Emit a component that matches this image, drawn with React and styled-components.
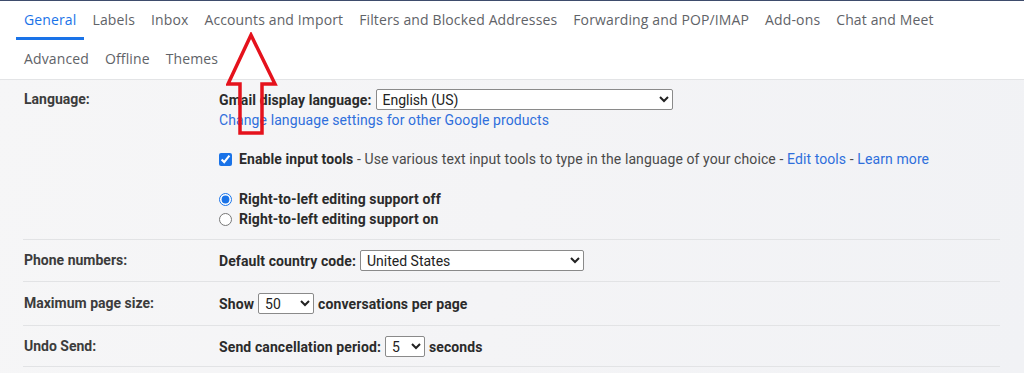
import React from "react";
import styled, { createGlobalStyle } from "styled-components";

const GlobalStyle = createGlobalStyle`
  html, body {
    margin: 0;
    padding: 0;
    background: #fff;
  }
  body {
    font-family: Roboto, "Liberation Sans", Arial, sans-serif;
  }
`;

const tabsTop = ["General", "Labels", "Inbox", "Accounts and Import", "Filters and Blocked Addresses", "Forwarding and POP/IMAP", "Add-ons", "Chat and Meet"];
const tabsBottom = ["Advanced", "Offline", "Themes"];

const App = () => {
  return (
    <Page>
      <GlobalStyle />
      <TabBar>
        <TabRow>
          {tabsTop.map((t) => (
            <Tab key={t} $active={t === "General"}>
              {t}
            </Tab>
          ))}
        </TabRow>
        <TabRow>
          {tabsBottom.map((t) => (
            <Tab key={t}>{t}</Tab>
          ))}
        </TabRow>
      </TabBar>

      <Settings>
        <SettingRow $pad="9px 0 10px">
          <Label>Language:</Label>
          <Content>
            <Line>
              <b>Gmail display language:</b>
              <Select $width={297}>
                <option>English (US)</option>
              </Select>
            </Line>
            <Line>
              <Link>Change language settings for other Google products</Link>
            </Line>
            <Line $top={19}>
              <Check type="checkbox" defaultChecked />
              <b>Enable input tools</b>
              <Muted>
                &nbsp;- Use various text input tools to type in the language of your choice -&nbsp;
              </Muted>
              <Link>Edit tools</Link>
              <Muted>&nbsp;-&nbsp;</Muted>
              <Link>Learn more</Link>
            </Line>
            <Line $top={20}>
              <Check type="radio" name="rtl" defaultChecked />
              <b>Right-to-left editing support off</b>
            </Line>
            <Line>
              <Check type="radio" name="rtl" />
              <b>Right-to-left editing support on</b>
            </Line>
          </Content>
        </SettingRow>

        <SettingRow $pad="10px 0">
          <Label>Phone numbers:</Label>
          <Content>
            <Line>
              <b>Default country code:</b>
              <Select $width={224}>
                <option>United States</option>
              </Select>
            </Line>
          </Content>
        </SettingRow>

        <SettingRow $pad="11px 0">
          <Label>Maximum page size:</Label>
          <Content>
            <Line>
              <b>Show</b>
              <Select $width={56}>
                <option>50</option>
              </Select>
              <b>conversations per page</b>
            </Line>
          </Content>
        </SettingRow>

        <SettingRow $pad="10px 0 9px">
          <Label>Undo Send:</Label>
          <Content>
            <Line>
              <b>Send cancellation period:</b>
              <Select $width={40}>
                <option>5</option>
              </Select>
              <b>seconds</b>
            </Line>
          </Content>
        </SettingRow>
      </Settings>

      <Arrow width="60" height="110" viewBox="0 0 60 110">
        <path d="M25 3 L49 52 L36 52 L36 101 L14 101 L14 52 L2 52 Z" />
      </Arrow>
    </Page>
  );
};

export default App;

const Page = styled.div`
  position: relative;
  width: 1024px;
  height: 373px;
  overflow: hidden;
  background: linear-gradient(100deg, #f6f6f7 0%, #f4f4f6 50%, #f1f2f5 100%);
`;

const TabBar = styled.div`
  background: #fff;
  border-top: 1px solid #3e4c6c;
  border-bottom: 1px solid #e3e4e6;
  padding: 0 16px;
`;

const TabRow = styled.div`
  display: flex;
  height: 39px;
`;

const Tab = styled.div`
  display: flex;
  align-items: center;
  padding: 1px 8px 0;
  box-sizing: border-box;
  font-family: "Open Sans", Roboto, sans-serif;
  font-size: 14px;
  letter-spacing: 0.13px;
  color: ${(p) => (p.$active ? "#1a73e8" : "#5f6368")};
  border-bottom: 3px solid ${(p) => (p.$active ? "#1a73e8" : "transparent")};
  white-space: nowrap;
`;

const Settings = styled.div`
  width: 977px;
  margin-left: 23px;
`;

const SettingRow = styled.div`
  display: grid;
  grid-template-columns: 196px 1fr;
  padding: ${(p) => p.$pad};
  border-bottom: 1px solid #e2e3e5;
`;

const Label = styled.div`
  font-size: 14px;
  font-weight: 700;
  color: #3c3c3c;
  line-height: 20px;
  padding-left: 1px;
`;

const Content = styled.div`
  display: flex;
  flex-direction: column;
  font-size: 14px;
  letter-spacing: 0.1px;
  color: #3c3c3c;
  b {
    color: #2b2b2b;
  }
`;

const Line = styled.div`
  display: flex;
  align-items: center;
  min-height: 20px;
  line-height: 20px;
  margin-top: ${(p) => (p.$top ? `${p.$top}px` : "0")};
  white-space: nowrap;
`;

const Select = styled.select`
  width: ${(p) => p.$width}px;
  height: 21px;
  margin: 0 4px 0 4px;
  padding: 0 2px;
  font-family: Roboto, sans-serif;
  font-size: 14px;
  color: #222;
  background: #fff;
  border: 1px solid #8a8a8a;
  border-radius: 2px;
`;

const Link = styled.span`
  color: #2f6fdc;
`;

const Muted = styled.span`
  color: #4a4a4a;
`;

const Check = styled.input`
  width: 13px;
  height: 13px;
  margin: 0 7px 0 0;
  accent-color: #1a73e8;
`;

const Arrow = styled.svg`
  position: absolute;
  left: 226px;
  top: 32px;
  path {
    fill: none;
    stroke: #e5121c;
    stroke-width: 3.5;
    stroke-linejoin: miter;
  }
`;
